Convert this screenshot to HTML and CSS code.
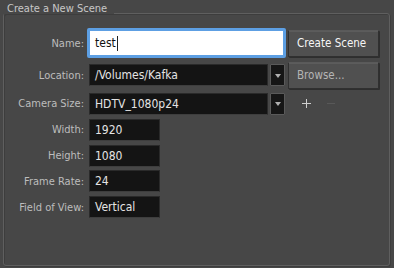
FILE: index.html
```html
<!DOCTYPE html>
<html>
<head>
<meta charset="utf-8">
<link rel="stylesheet" href="styles.css">
</head>
<body>
<fieldset class="scene">
  <legend class="scene-title">Create a New Scene</legend>
  <div class="form">
    <label class="lbl">Name:</label>
    <div class="name-input"><span class="name-text">test</span><span class="caret"></span></div>
    <button class="btn btn-primary">Create Scene</button>

    <label class="lbl">Location:</label>
    <div class="combo"><div class="combo-field">/Volumes/Kafka</div><div class="combo-arrow"><span class="tri"></span></div></div>
    <button class="btn btn-browse">Browse...</button>

    <label class="lbl">Camera Size:</label>
    <div class="combo"><div class="combo-field">HDTV_1080p24</div><div class="combo-arrow"><span class="tri"></span></div></div>
    <div class="plusminus"><span class="plus"></span><span class="minus"></span></div>

    <label class="lbl">Width:</label>
    <div class="field">1920</div>
    <div></div>

    <label class="lbl">Height:</label>
    <div class="field">1080</div>
    <div></div>

    <label class="lbl">Frame Rate:</label>
    <div class="field">24</div>
    <div></div>

    <label class="lbl">Field of View:</label>
    <div class="field">Vertical</div>
    <div></div>
  </div>
</fieldset>
</body>
</html>
```
FILE: styles.css
```css
html, body {
  margin: 0;
  padding: 0;
  background: #474747;
  width: 394px;
  height: 268px;
  overflow: hidden;
  font-family: "DejaVu Sans Condensed", "DejaVu Sans", sans-serif;
}
.scene {
  box-sizing: border-box;
  margin: 3px 4px 0 3px;
  height: 263px;
  border: 1px solid #5f5f5f;
  border-radius: 3px;
  box-shadow: inset 1px 1px 0 #3d3d3d, 1px 1px 0 #3d3d3d;
  padding: 0;
  min-width: 0;
}
.scene-title {
  color: #c8c8c8;
  font-size: 11px;
  line-height: 12px;
  padding: 0 7px 8px 3px;
}
.form {
  display: grid;
  grid-template-columns: 80px 196px 89px;
  column-gap: 5px;
  grid-template-rows: 30px 27px 22px 22px 22px 22px 22px;
  row-gap: 3.9px;
  margin-top: 5px;
  align-items: center;
}
.form > *:nth-child(3n) { margin-left: -2px; }
.lbl {
  color: #bdbdbd;
  font-size: 11px;
  text-align: right;
  white-space: nowrap;
}
.name-input {
  box-sizing: border-box;
  height: 30px;
  margin-left: -2px;
  margin-right: -1px;
  border: 3px solid #5d9fe3;
  border-radius: 2px;
  background: #fff;
  display: flex;
  align-items: center;
  padding-left: 5px;
  color: #111;
  font-size: 12px;
}
.caret {
  display: inline-block;
  width: 1px;
  height: 15px;
  background: #222;
  margin-left: 1px;
}
.btn {
  box-sizing: border-box;
  height: 27px;
  background: #505050;
  border: 1px solid #303030;
  border-top-color: #5a5a5a;
  box-shadow: inset 0 1px 0 #5c5c5c, 1px 1px 0 #2e2e2e;
  border-radius: 1px;
  font-family: "DejaVu Sans Condensed", "DejaVu Sans", sans-serif;
  font-size: 11.5px;
  text-align: left;
  padding: 0 0 0 8px;
  white-space: nowrap;
}
.btn-primary {
  color: #f6f6f6;
}
.btn-browse {
  color: #b5b5b5;
}
.combo {
  display: flex;
  gap: 2px;
  height: 22px;
}
.combo-field, .field {
  box-sizing: border-box;
  height: 22px;
  background: #141414;
  border: 1px solid #2a2a2a;
  border-bottom-color: #3e3e3e;
  color: #e4e4e4;
  font-size: 12px;
  line-height: 20px;
  padding-left: 5px;
  white-space: nowrap;
}
.combo-field { flex: 1; }
.field { width: 71px; }
.combo-arrow {
  box-sizing: border-box;
  width: 15px;
  height: 22px;
  background: #161616;
  border: 1px solid #5a5a5a;
  border-radius: 1px;
  display: flex;
  justify-content: center;
  align-items: center;
}
.tri {
  width: 0;
  height: 0;
  border-left: 3px solid transparent;
  border-right: 3px solid transparent;
  border-top: 4px solid #b0b0b0;
  margin-top: 1px;
}
.plusminus {
  display: flex;
  align-items: center;
  height: 22px;
  padding-left: 14px;
  gap: 16px;
}
.plus {
  position: relative;
  width: 9px;
  height: 9px;
}
.plus::before, .plus::after {
  content: "";
  position: absolute;
  background: #cfcfcf;
}
.plus::before { left: 0; top: 4px; width: 9px; height: 1px; }
.plus::after { left: 4px; top: 0; width: 1px; height: 9px; }
.minus {
  width: 8px;
  height: 1px;
  background: #585858;
}
```
